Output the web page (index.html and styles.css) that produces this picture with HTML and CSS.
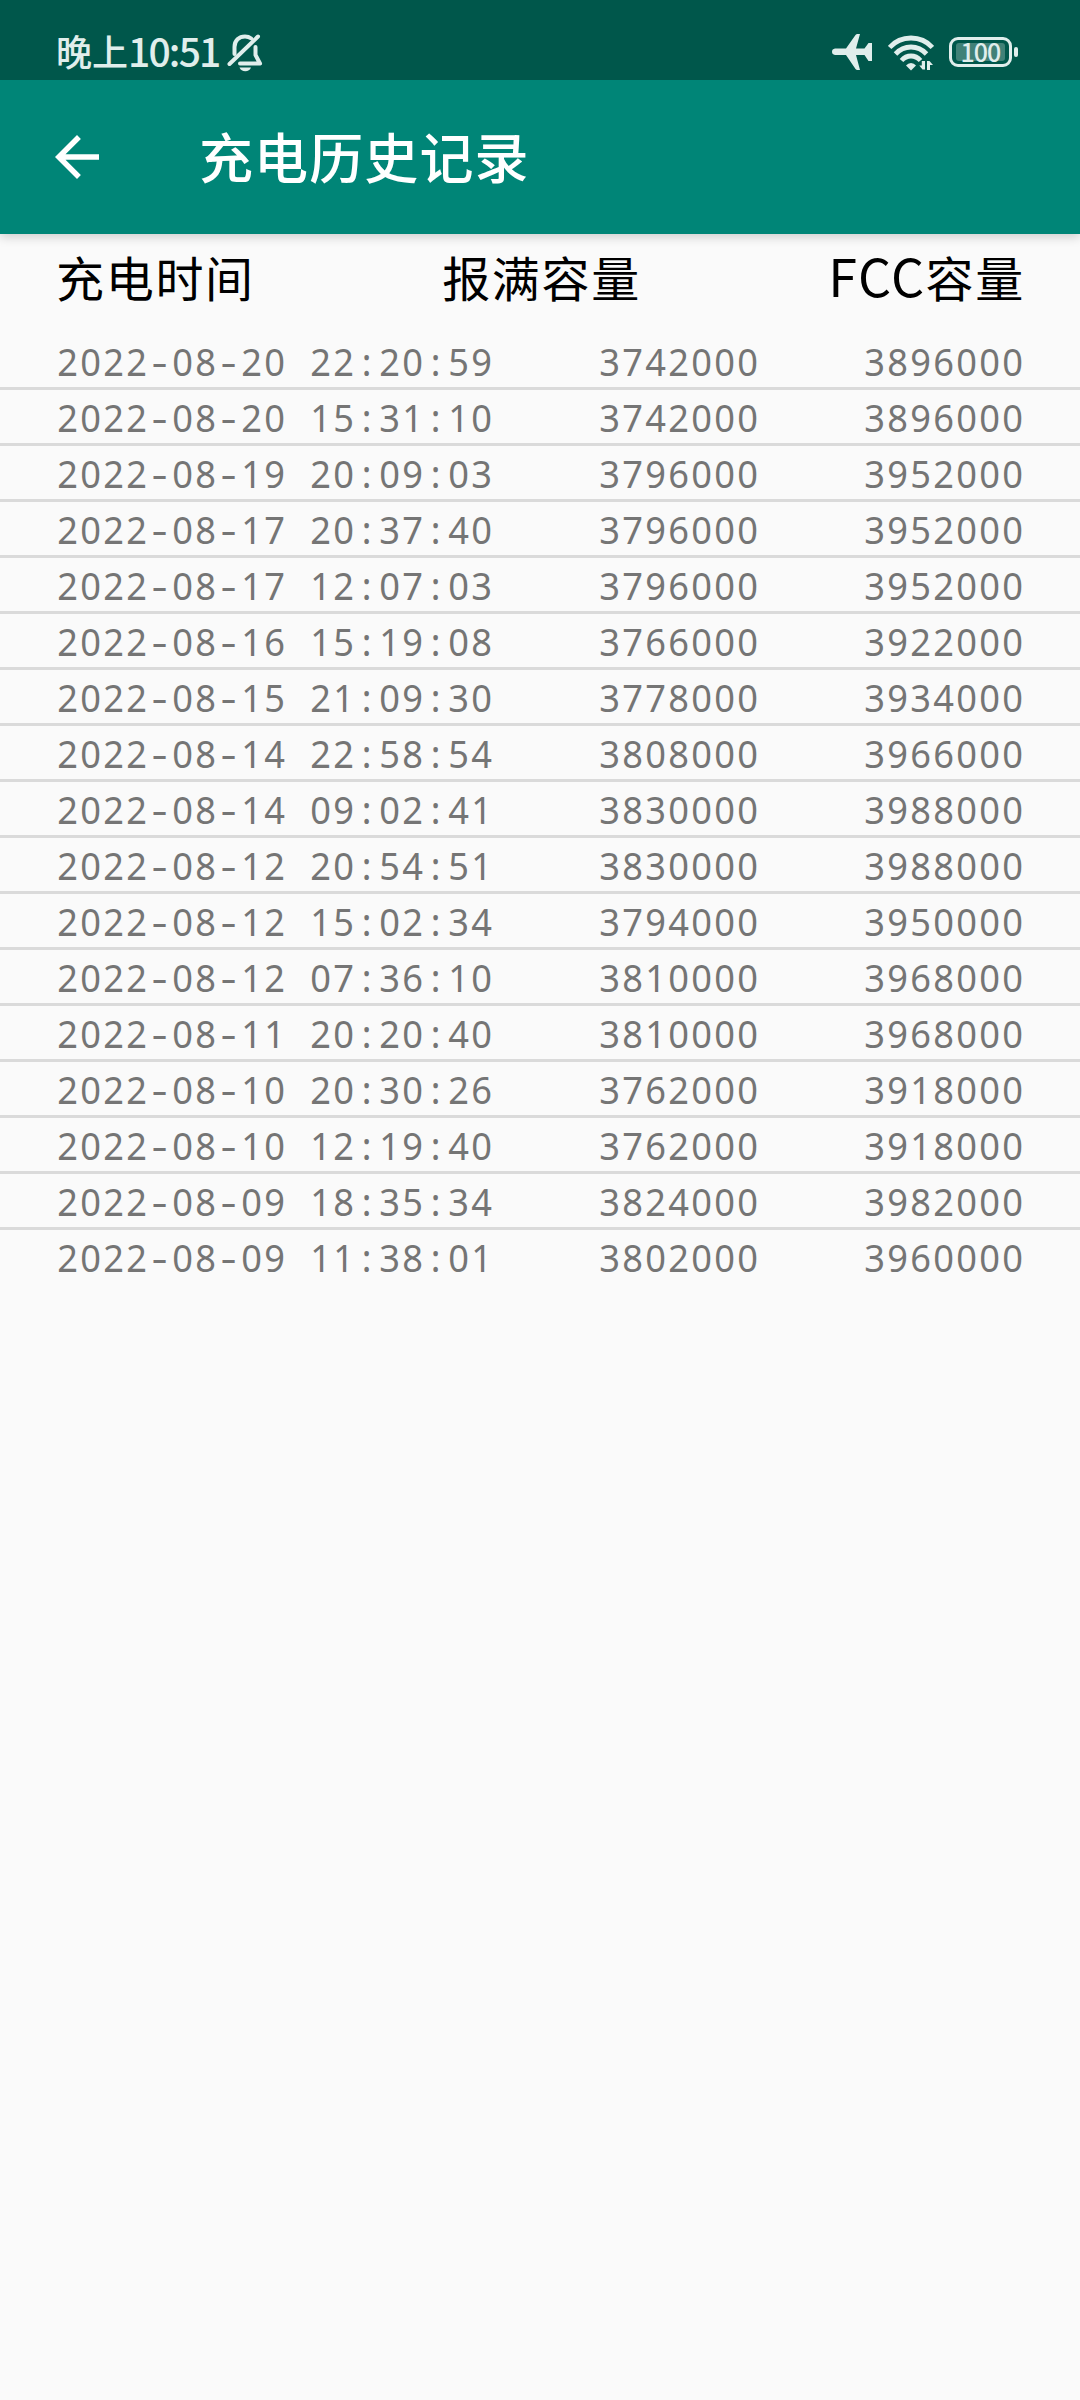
FILE: index.html
```html
<!DOCTYPE html>
<html lang="zh-CN">
<head>
	<meta charset="UTF-8">
	<title>充电历史记录</title>
	<link rel="stylesheet" href="styles.css">
</head>
<body>
	<header class="top">
		<div class="status">
			<div class="clock">
				<span class="ampm">晚上</span><span class="time">10:51</span>
				<svg class="bell" viewBox="0 0 36 40">
					<g fill="none" stroke="#e0eeec" stroke-width="4" stroke-linecap="round" stroke-linejoin="round">
						<path d="M7.500 21V14C7.500 7.500 12 3.500 18 3.500C20.500 3.500 22.500 4.200 24.300 5.500"/>
						<path d="M28.500 14V22L33 30.500H13"/>
						<path d="M2.500 31L31 3.500"/>
					</g>
					<path d="M12.500 34.500H24C23 37 21 38.300 18.300 38.300S13.500 37 12.500 34.500z" fill="#e0eeec"/>
				</svg>
			</div>
			<div class="signals">
				<svg class="plane" viewBox="0 0 40 36">
					<path d="M3 14.500H14L23.500 1Q24.200 0 25.500 0H28L24 14.500H32.500L36.500 9H40V27H36.500L32.500 21H24L28 36H25.500Q24.200 36 23.500 35L14 21H3Q0 20.500 0 17.750Q0 15 3 14.500z" fill="#e0eeec"/>
				</svg>
				<svg class="wifi" viewBox="0 0 46 36">
					<g fill="none" stroke="#e0eeec" stroke-width="4.800">
						<path d="M1.600 12.500Q10 3 23 3T44.400 12.500"/>
						<path d="M7.500 19Q14 12 23 12T38.500 19"/>
						<path d="M13.500 25.500Q17.500 21 23 21T32.500 25.500"/>
					</g>
					<path d="M18 30.500Q20 28 23 28T28 30.500L23 35.500z" fill="#e0eeec"/>
					<path d="M37 26V34.500H34.500L31.300 30.500H33.800V26zM39 35V26H41.500L45 30H42V35z" fill="#e0eeec"/>
				</svg>
				<div class="battery"><span class="level">100</span></div>
			</div>
		</div>
		<div class="bar">
			<svg class="back" viewBox="0 0 24 24">
				<path d="M20 11H7.830l5.590-5.590L12 4l-8 8 8 8 1.410-1.410L7.830 13H20z" fill="#fff"/>
			</svg>
			<h1>充电历史记录</h1>
		</div>
	</header>
	<div class="head">
		<span>充电时间</span>
		<span>报满容量</span>
		<span><i>FCC</i>容量</span>
	</div>
	<ul id="list"></ul>
	<script type="text/javascript" src="list.js"></script>
</body>
</html>
```

FILE: styles.css
```css
body, h1, ul, li {
	margin: 0;
	padding: 0;
}

body {
	background-color: #fafafa;
	font-family: "Noto Sans CJK SC", sans-serif;
}

.top {
	position: relative;
	height: 234px;
	background-color: #008577;
	box-shadow: 0 3px 10px rgba(0, 0, 0, 0.18);
}

.status {
	box-sizing: border-box;
	height: 80px;
	padding: 0 62px 0 56px;
	background-color: #00574b;
	color: #e0eeec;
	display: flex;
	justify-content: space-between;
}

.clock, .signals {
	display: flex;
	align-items: flex-start;
	white-space: nowrap;
}

.ampm {
	width: 72px;
	margin-top: 25px;
	font-size: 36px;
	line-height: 50px;
	font-weight: 500;
}

.time {
	width: 99px;
	margin-top: 25px;
	font-size: 39px;
	line-height: 50px;
	font-weight: 500;
	letter-spacing: -1.800px;
}

.bell {
	width: 36px;
	height: 40px;
	margin-top: 33px;
}

.plane {
	width: 40px;
	height: 36px;
	margin: 34px 16px 0 0;
}

.wifi {
	width: 46px;
	height: 36px;
	margin: 35px 15px 0 0;
}

.battery {
	position: relative;
	box-sizing: border-box;
	width: 63px;
	height: 30px;
	margin: 37px 6px 0 0;
	padding: 3px 4px;
	border: 3px solid #e0eeec;
	border-radius: 9px;
}

.battery:after {
	content: '';
	position: absolute;
	right: -9px;
	top: 7px;
	width: 4px;
	height: 10px;
	border-radius: 2px;
	background-color: #e0eeec;
}

.level {
	display: block;
	height: 18px;
	border-radius: 3px;
	background-color: #408177;
	font-size: 25px;
	line-height: 16px;
	font-weight: 500;
	letter-spacing: -1px;
	text-align: center;
}

.bar {
	height: 154px;
	padding-left: 44px;
	display: flex;
	align-items: center;
}

.back {
	width: 66px;
	height: 66px;
}

.bar h1 {
	margin-left: 89px;
	padding-bottom: 3px;
	color: #fff;
	font-size: 54px;
	line-height: 80px;
	font-weight: 500;
	letter-spacing: 1.100px;
}

.head {
	height: 100px;
	padding: 0 55px 0 56px;
	display: flex;
	justify-content: space-between;
	color: #000;
	font-size: 48px;
	line-height: 84px;
	letter-spacing: 1.700px;
}

.head i {
	font-style: normal;
	font-size: 52px;
	line-height: 1;
	letter-spacing: 1.500px;
}

#list li {
	height: 53px;
	padding: 0 56px;
	border-bottom: 3px solid #dadada;
	display: flex;
	justify-content: space-between;
	list-style-type: none;
	color: #757575;
	font-family: "Noto Sans", sans-serif;
	font-size: 38.500px;
	line-height: 54px;
}

#list li:last-child {
	border-bottom: none;
}

#list span {
	display: flex;
}

#list b {
	width: 23px;
	font-weight: normal;
	text-align: center;
	white-space: pre;
	transform: scaleX(0.940);
}

#list .dash {
	transform: scaleX(1.300);
}
```

FILE: list.js
```javascript
var records = [
	['2022-08-20 22:20:59', '3742000', '3896000'],
	['2022-08-20 15:31:10', '3742000', '3896000'],
	['2022-08-19 20:09:03', '3796000', '3952000'],
	['2022-08-17 20:37:40', '3796000', '3952000'],
	['2022-08-17 12:07:03', '3796000', '3952000'],
	['2022-08-16 15:19:08', '3766000', '3922000'],
	['2022-08-15 21:09:30', '3778000', '3934000'],
	['2022-08-14 22:58:54', '3808000', '3966000'],
	['2022-08-14 09:02:41', '3830000', '3988000'],
	['2022-08-12 20:54:51', '3830000', '3988000'],
	['2022-08-12 15:02:34', '3794000', '3950000'],
	['2022-08-12 07:36:10', '3810000', '3968000'],
	['2022-08-11 20:20:40', '3810000', '3968000'],
	['2022-08-10 20:30:26', '3762000', '3918000'],
	['2022-08-10 12:19:40', '3762000', '3918000'],
	['2022-08-09 18:35:34', '3824000', '3982000'],
	['2022-08-09 11:38:01', '3802000', '3960000']
];

// 每个字符等宽
function cells(text) {
	var html = '';
	for (var i = 0; i < text.length; i++) {
		html += '<b' + (text[i] == '-' ? ' class="dash"' : '') + '>' + text[i] + '</b>';
	}
	return '<span>' + html + '</span>';
}

var list = document.getElementById('list'),
	html = '';

for (var i = 0; i < records.length; i++) {
	html += '<li>' + records[i].map(cells).join('') + '</li>';
}
list.innerHTML = html;
```
